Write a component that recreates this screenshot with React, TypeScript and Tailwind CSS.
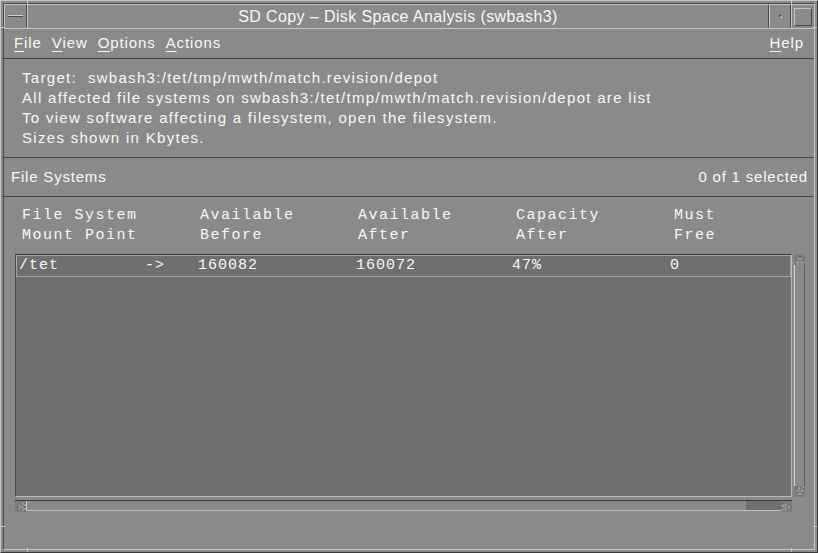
const sans = "font-['Liberation_Sans',Arial,sans-serif]";
const mono = "font-['Liberation_Mono','Courier_New',monospace]";

function Arrow({ dir }: { dir: "up" | "down" | "left" | "right" }) {
  const pts = {
    up: "5,1 9,9 1,9",
    down: "1,1 9,1 5,9",
    left: "1,5 9,1 9,9",
    right: "1,1 9,5 1,9",
  }[dir];
  return (
    <div className="flex h-[11px] w-[11px] shrink-0 items-center justify-center bg-[#7c7c7c]">
      <svg width="10" height="10" viewBox="0 0 10 10">
        <polygon points={pts} fill="#888888" stroke="#bdbdbd" strokeWidth="1" />
        <polygon points={pts} fill="none" stroke="#4a4a4a" strokeWidth="1" strokeDasharray="2 2" />
      </svg>
    </div>
  );
}

function Mn({ c, rest }: { c: string; rest: string }) {
  return (
    <span>
      <span className="underline decoration-1 underline-offset-[3px]">{c}</span>
      {rest}
    </span>
  );
}

export default function App() {
  return (
    <div className="relative h-[553px] w-[818px] overflow-hidden border-t border-l border-r border-b border-t-[#c8c8c8] border-l-[#c8c8c8] border-r-[#3a3a3a] border-b-[#3a3a3a] bg-[#8a8a8a] p-[2px] text-[#f8f8f8]">
      {/* frame handle marks */}
      <div className="absolute left-[26px] top-0 h-[4px] w-px bg-[#c8c8c8]" />
      <div className="absolute left-[790px] top-0 h-[4px] w-px bg-[#c8c8c8]" />
      <div className="absolute left-0 top-[26px] h-px w-[4px] bg-[#c8c8c8]" />
      <div className="absolute right-0 top-[26px] h-px w-[4px] bg-[#c8c8c8]" />
      <div className="absolute left-0 top-[525px] h-px w-[4px] bg-[#c8c8c8]" />
      <div className="absolute right-0 top-[525px] h-px w-[4px] bg-[#c8c8c8]" />
      <div className="absolute bottom-0 left-[26px] h-[4px] w-px bg-[#c8c8c8]" />
      <div className="absolute bottom-0 left-[790px] h-[4px] w-px bg-[#c8c8c8]" />

      <div className="flex h-full flex-col border-t border-l border-r border-b border-t-[#4a4a4a] border-l-[#4a4a4a] border-r-[#c8c8c8] border-b-[#c8c8c8]">
        {/* title bar */}
        <div className="flex h-[24px] shrink-0">
          <div className="flex w-[23px] items-center justify-center border-t border-l border-r border-b border-t-[#c4c4c4] border-l-[#c4c4c4] border-r-[#4a4a4a] border-b-[#8a8a8a]">
            <div className="h-[2px] w-[15px] border-t border-b border-t-[#d0d0d0] border-b-[#4a4a4a]" />
          </div>
          <div className={`flex flex-1 items-center justify-center border-t border-l border-r border-t-[#c4c4c4] border-l-[#c4c4c4] border-r-[#4a4a4a] text-[16px] tracking-[0.4px] ${sans}`}>
            SD Copy – Disk Space Analysis (swbash3)
          </div>
          <div className="flex w-[22px] items-center justify-center border-t border-l border-r border-t-[#c4c4c4] border-l-[#c4c4c4] border-r-[#4a4a4a]">
            <div className="h-[3px] w-[3px] border-t border-l border-r border-b border-t-[#4a4a4a] border-l-[#4a4a4a] border-r-[#c4c4c4] border-b-[#c4c4c4]" />
          </div>
          <div className="flex w-[23px] items-center justify-center border-t border-l border-t-[#c4c4c4] border-l-[#c4c4c4]">
            <div className="h-[18px] w-[18px] border-t border-l border-r border-b border-t-[#c4c4c4] border-l-[#c4c4c4] border-r-[#4a4a4a] border-b-[#4a4a4a]" />
          </div>
        </div>

        {/* menu bar */}
        <div className={`flex h-[31px] shrink-0 items-center border-t border-b border-t-[#c4c4c4] border-b-[#3f3f3f] pl-[10px] pr-[10px] text-[15px] tracking-[0.9px] ${sans}`}>
          <div className="flex gap-[10px]">
            <Mn c="F" rest="ile" />
            <Mn c="V" rest="iew" />
            <Mn c="O" rest="ptions" />
            <Mn c="A" rest="ctions" />
          </div>
          <div className="ml-auto">
            <Mn c="H" rest="elp" />
          </div>
        </div>

        {/* client area */}
        <div className="flex flex-1 flex-col">
          <div className={`pb-[9px] pl-[18px] pt-[9px] text-[15px] leading-[20px] tracking-[1.3px] ${sans}`}>
            <div>Target:&nbsp; swbash3:/tet/tmp/mwth/match.revision/depot</div>
            <div>All affected file systems on swbash3:/tet/tmp/mwth/match.revision/depot are list</div>
            <div>To view software affecting a filesystem, open the filesystem.</div>
            <div>Sizes shown in Kbytes.</div>
          </div>
          <div className="h-px bg-[#444444]" />
          <div className={`flex h-[38px] items-center pl-[7px] pr-[6px] text-[15px] leading-[20px] tracking-[0.8px] ${sans}`}>
            <span>File Systems</span>
            <span className="ml-auto">0 of 1 selected</span>
          </div>
          <div className="h-px bg-[#444444]" />

          {/* column headers */}
          <div className={`flex pl-[18px] pt-[9px] text-[15px] leading-[20px] tracking-[1.5px] ${mono}`}>
            <div className="w-[178px]">File System<br />Mount Point</div>
            <div className="w-[158px]">Available<br />Before</div>
            <div className="w-[158px]">Available<br />After</div>
            <div className="w-[158px]">Capacity<br />After</div>
            <div>Must<br />Free</div>
          </div>

          {/* list + vertical scrollbar */}
          <div className="mt-[8px] flex h-[243px] pl-[11px] pr-[9px]">
            <div className="flex-1 border-t border-l border-r border-b border-t-[#3a3a3a] border-l-[#4f4f4f] border-r-[#b8b8b8] border-b-[#b8b8b8] bg-[#6f6f6f]">
              <div className={`flex h-[22px] items-center border border-[#a4a4a4] pl-[2px] text-[15px] leading-[20px] tracking-[1px] ${mono}`}>
                <div className="w-[126px]">/tet</div>
                <div className="w-[53px]">-&gt;</div>
                <div className="w-[158px]">160082</div>
                <div className="w-[156px]">160072</div>
                <div className="w-[158px]">47%</div>
                <div>0</div>
              </div>
            </div>
            <div className="ml-[2px] flex w-[11px] flex-col">
              <Arrow dir="up" />
              <div className="flex-1 border-l border-r border-l-[#d8d8d8] border-r-[#5a5a5a] bg-[#8a8a8a]" />
              <Arrow dir="down" />
            </div>
          </div>

          {/* horizontal scrollbar */}
          <div className="mt-[3px] flex pl-[11px] pr-[22px]">
            <div className="flex h-[11px] flex-1 border-t border-b border-t-[#3a3a3a] border-b-[#c0c0c0] bg-[#6f6f6f]">
              <Arrow dir="left" />
              <div className="w-[720px] border-l border-l-[#d0d0d0] bg-[#8a8a8a]" />
              <div className="flex-1" />
              <Arrow dir="right" />
            </div>
          </div>
        </div>
      </div>
    </div>
  );
}
